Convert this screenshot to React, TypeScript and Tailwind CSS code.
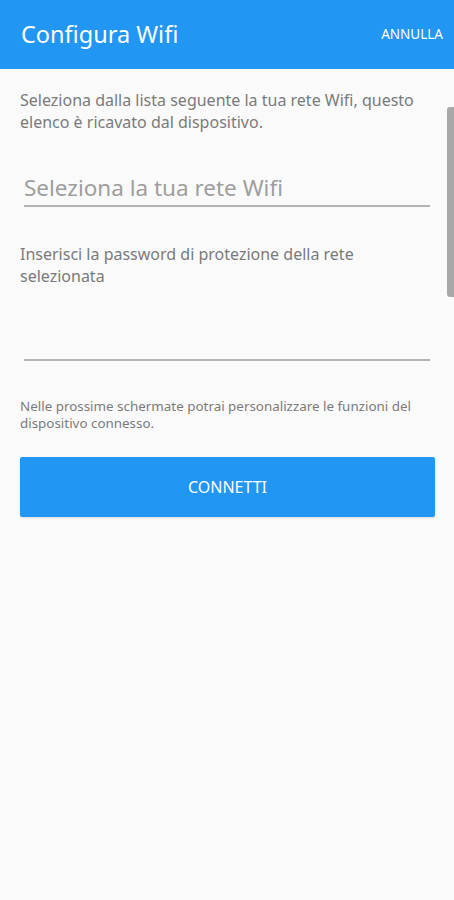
import React from 'react';

export default function App() {
  return (
    <div className="w-[454px] h-[900px] bg-[#fafafa] flex flex-col relative overflow-hidden" style={{ fontFamily: '"Noto Sans", Roboto, sans-serif' }}>
      <header className="h-[69px] bg-[#2196f3] flex items-center justify-between pl-[21px] pr-[11px] shrink-0">
        <h1 className="text-white text-[23.5px] leading-none">Configura Wifi</h1>
        <button className="text-white text-[13.5px] leading-none">ANNULLA</button>
      </header>

      <main className="flex flex-col px-5 pt-[20px]">
        <p className="text-[#7a7a7a] text-[16px] leading-[22px]">
          Seleziona dalla lista seguente la tua rete Wifi, questo elenco è ricavato dal dispositivo.
        </p>

        <div className="mt-[41px] mx-1 border-b-2 border-[#b3b3b3] h-[33px] flex items-end pb-[2px]">
          <span className="text-[#9e9e9e] text-[22.5px] leading-[30px]">Seleziona la tua rete Wifi</span>
        </div>

        <p className="mt-[36px] text-[#7a7a7a] text-[16px] leading-[22px]">
          Inserisci la password di protezione della rete selezionata
        </p>

        <div className="mt-[72px] mx-1 border-b-2 border-[#b3b3b3]" />

        <p className="mt-[37px] text-[#7a7a7a] text-[13.4px] leading-[17px]">
          Nelle prossime schermate potrai personalizzare le funzioni del dispositivo connesso.
        </p>

        <button className="mt-[25px] mr-[-1px] h-[60px] bg-[#2196f3] rounded-[2px] shadow-sm text-white text-[16px]">
          CONNETTI
        </button>
      </main>

      <div className="absolute right-0 top-[107px] w-[7px] h-[190px] bg-[#a8a8a8] rounded-l-[3px]" />
    </div>
  );
}
